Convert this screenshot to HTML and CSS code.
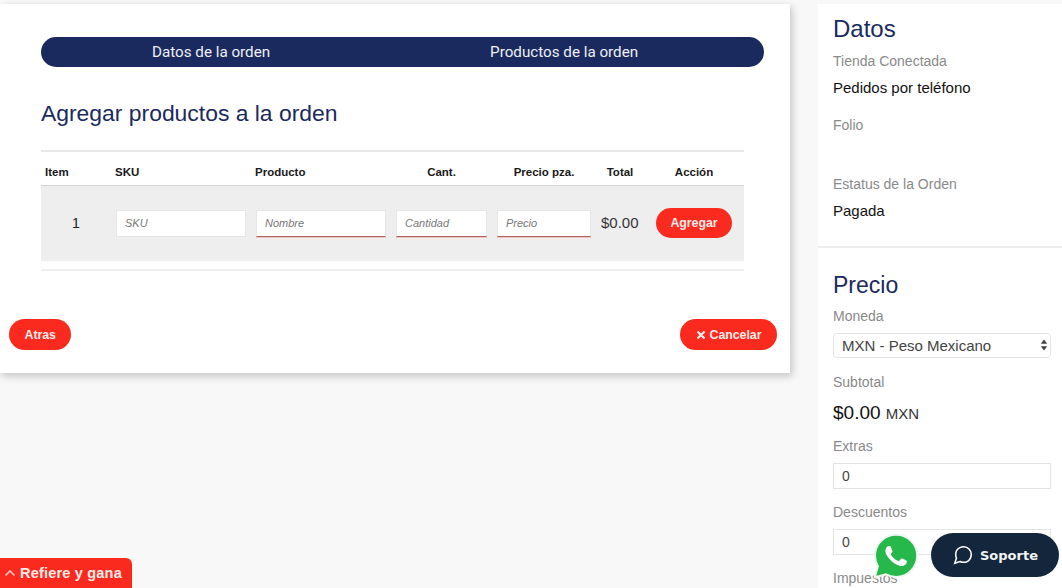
FILE: index.html
```html
<!DOCTYPE html>
<html lang="es">
<head>
  <meta charset="UTF-8" />
  <title>Agregar productos a la orden</title>
  <link rel="stylesheet" href="styles.css">
</head>
<body>
  <div class="layout">
    <main class="card">
      <nav class="steps">
        <span class="step step-first">Datos de la orden</span>
        <span class="step step-second">Productos de la orden</span>
      </nav>

      <h2 class="card-title">Agregar productos a la orden</h2>

      <table class="products">
        <colgroup>
          <col class="col-item"><col class="col-sku"><col class="col-name"><col class="col-qty">
          <col class="col-price"><col class="col-total"><col class="col-action">
        </colgroup>
        <thead>
          <tr>
            <th class="left">Item</th>
            <th class="left">SKU</th>
            <th class="left">Producto</th>
            <th>Cant.</th>
            <th>Precio pza.</th>
            <th>Total</th>
            <th>Acción</th>
          </tr>
        </thead>
        <tbody>
          <tr>
            <td class="row-num">1</td>
            <td><input class="cell-input" type="text" placeholder="SKU" /></td>
            <td><input class="cell-input required" type="text" placeholder="Nombre" /></td>
            <td><input class="cell-input required" type="text" placeholder="Cantidad" /></td>
            <td><input class="cell-input required" type="text" placeholder="Precio" /></td>
            <td class="row-total">$0.00</td>
            <td class="row-action"><button class="btn btn-add" type="button">Agregar</button></td>
          </tr>
        </tbody>
      </table>
      <div class="products-end"></div>

      <div class="card-actions">
        <button class="btn" type="button">Atras</button>
        <button class="btn" type="button">
          <svg class="btn-x" viewBox="0 0 10 10"><path d="M1.5 1.5l7 7M8.5 1.5l-7 7" /></svg>Cancelar
        </button>
      </div>
    </main>

    <aside class="side">
      <section class="side-block side-data">
        <h3 class="side-title">Datos</h3>
        <div class="label">Tienda Conectada</div>
        <div class="value">Pedidos por teléfono</div>
        <div class="label label-folio">Folio</div>
        <div class="value value-empty"></div>
        <div class="label">Estatus de la Orden</div>
        <div class="value">Pagada</div>
      </section>

      <section class="side-block side-price">
        <h3 class="side-title">Precio</h3>
        <div class="label">Moneda</div>
        <div class="select-wrap">
          <select class="field-box">
            <option>MXN - Peso Mexicano</option>
          </select>
          <svg class="select-arrows" viewBox="0 0 8 12"><path d="M4 0.5L7.2 4.8H0.8zM4 11.5L0.8 7.2H7.2z" /></svg>
        </div>
        <div class="label">Subtotal</div>
        <div class="amount">$0.00 <small>MXN</small></div>
        <div class="label">Extras</div>
        <input class="field-box" type="text" value="0" />
        <div class="label">Descuentos</div>
        <input class="field-box" type="text" value="0" />
        <div class="label">Impuestos</div>
      </section>
    </aside>
  </div>

  <a class="refer" href="#">
    <svg class="refer-arrow" viewBox="0 0 12 8"><path d="M1.5 6.5L6 2l4.5 4.5" /></svg>Refiere y gana
  </a>

  <a class="whatsapp" href="#">
    <svg viewBox="-1.5 -1.5 27 27">
      <path class="wa-bubble" d="M12.05 0C5.495 0 .16 5.335.157 11.892c0 2.096.547 4.142 1.588 5.945L.057 24l6.305-1.654a11.882 11.882 0 005.683 1.448h.005c6.554 0 11.89-5.335 11.893-11.893A11.821 11.821 0 0012.05 0z" />
      <path class="wa-phone" d="M17.472 14.382c-.297-.149-1.758-.867-2.03-.967-.273-.099-.471-.148-.67.15-.197.297-.767.966-.94 1.164-.173.199-.347.223-.644.075-.297-.15-1.255-.463-2.39-1.475-.883-.788-1.48-1.761-1.653-2.059-.173-.297-.018-.458.13-.606.134-.133.298-.347.446-.52.149-.174.198-.298.298-.497.099-.198.05-.371-.025-.52-.075-.149-.669-1.612-.916-2.207-.242-.579-.487-.5-.669-.51-.173-.008-.371-.01-.57-.01-.198 0-.52.074-.792.372-.272.297-1.04 1.016-1.04 2.479 0 1.462 1.065 2.875 1.213 3.074.149.198 2.096 3.2 5.077 4.487.709.306 1.262.489 1.694.625.712.227 1.36.195 1.871.118.571-.085 1.758-.719 2.006-1.413.248-.694.248-1.289.173-1.413-.074-.124-.272-.198-.57-.347z" />
    </svg>
  </a>

  <a class="support" href="#">
    <svg class="support-icon" viewBox="0 0 24 24"><path d="M21 11.5a8.38 8.38 0 0 1-.9 3.8 8.5 8.5 0 0 1-7.6 4.7 8.38 8.38 0 0 1-3.8-.9L3 21l1.9-5.7a8.38 8.38 0 0 1-.9-3.8 8.5 8.5 0 0 1 4.7-7.6 8.38 8.38 0 0 1 3.8-.9h.5a8.48 8.48 0 0 1 8 8v.5z" /></svg>
    Soporte
  </a>
</body>
</html>
```

FILE: styles.css
```css
* {
  box-sizing: border-box;
}

html, body {
  height: 100%;
  overflow: hidden;
}

body {
  font-family: 'Liberation Sans', Arial, sans-serif;
  background-color: #f8f8f8;
  color: #111;
  margin: 0;
  padding: 4px 0 0;
}

.layout {
  display: flex;
  align-items: flex-start;
  gap: 28px;
}

/* main card */
.card {
  width: 790px;
  height: 369px;
  flex-shrink: 0;
  background-color: #fff;
  box-shadow: 2px 3px 8px rgba(0, 0, 0, 0.22);
  padding: 33px 13px 0 9px;
}

.steps {
  display: flex;
  margin: 0 0 0 32px;
  width: 723px;
  height: 30px;
  align-items: center;
  background-color: #1b2a5e;
  border-radius: 15px;
  color: #eef0f6;
  font-family: Roboto, sans-serif;
  font-size: 15.2px;
}

.step-first {
  margin-left: 111px;
}

.step-second {
  margin-left: 220px;
}

.card-title {
  margin: 32px 0 22px 32px;
  font-size: 22.9px;
  line-height: 29px;
  font-weight: 400;
  color: #1b2a5e;
}

.products {
  margin-left: 32px;
  width: 703px;
  table-layout: fixed;
  border-collapse: collapse;
  border-top: 2px solid #e8e8e8;
}

.col-item { width: 70px; }
.col-sku { width: 140px; }
.col-name { width: 140px; }
.col-qty { width: 101px; }
.col-price { width: 104px; }
.col-total { width: 48px; }
.col-action { width: 100px; }

.products th {
  height: 34px;
  padding: 7px 0 0;
  font-size: 11.5px;
  font-weight: 700;
  text-align: center;
  color: #1a1a1a;
  border-bottom: 1px solid #d4d4d4;
}

.products th.left {
  text-align: left;
  padding-left: 4px;
}

.products td {
  height: 76px;
  padding: 0 5px;
  background-color: #eeeeee;
}

.products-end {
  margin: 8px 0 0 32px;
  width: 703px;
  border-top: 2px solid #efefef;
}

.row-num {
  text-align: center;
  font-size: 14px;
  color: #222;
}

.products td.row-total {
  padding: 0 0 2px 5px;
  font-size: 15px;
  color: #333;
}

.products td.row-action {
  padding: 0 12px;
  text-align: center;
}

.cell-input {
  display: block;
  width: 100%;
  height: 27px;
  padding: 0 8px;
  background-color: #fff;
  border: 1px solid #e6e6e6;
  font-family: 'Liberation Sans', Arial, sans-serif;
  font-size: 11px;
  font-style: italic;
  color: #555;
}

.cell-input::placeholder {
  color: #777;
  opacity: 1;
}

.cell-input.required {
  border-bottom: 1px solid #b5635e;
  box-shadow: 0 1px 0 rgba(240, 100, 90, 0.3);
}

.btn {
  height: 31px;
  padding: 0 15.5px;
  border: none;
  border-radius: 16px;
  background-color: #fb2a1e;
  color: #fdecea;
  font-family: 'Liberation Sans', Arial, sans-serif;
  font-size: 12.3px;
  font-weight: 700;
}

.btn-add {
  height: 30px;
  width: 76px;
  padding: 0;
}

.btn-x {
  width: 10px;
  height: 10px;
  margin-right: 4px;
  vertical-align: -1px;
  fill: none;
  stroke: #fdecea;
  stroke-width: 2.2;
}

.card-actions {
  display: flex;
  justify-content: space-between;
  margin-top: 48px;
}

/* right column */
.side {
  flex: 1;
  min-width: 0;
  background-color: #fff;
}

.side-block {
  padding: 10px 11px 25px 15px;
}

.side-data {
  border-bottom: 2px solid #eeeeee;
}

.side-price {
  padding-top: 22px;
}

.side-title {
  margin: 0 0 8px;
  font-size: 24px;
  line-height: 30px;
  font-weight: 400;
  color: #1b2a5e;
}

.side-price .side-title {
  margin-bottom: 7px;
  font-size: 23px;
}

.label {
  padding-top: 1px;
  font-size: 14px;
  line-height: 17px;
  color: #8a8a8a;
}

.value {
  margin-top: 8px;
  font-size: 15px;
  line-height: 20px;
  color: #111;
}

.label-folio {
  margin-top: 18px;
}

.value-empty {
  height: 18px;
  margin-bottom: 15px;
}

.select-wrap {
  position: relative;
}

.field-box {
  display: block;
  width: 100%;
  height: 26px;
  margin: 8px 0 14px;
  padding: 0 8px;
  appearance: none;
  background-color: #fff;
  border: 1px solid #e4e4e4;
  font-family: 'Liberation Sans', Arial, sans-serif;
  font-size: 14px;
  color: #444;
}

select.field-box {
  height: 25px;
  margin-bottom: 15px;
  border-radius: 4px;
  font-size: 15px;
}

.select-arrows {
  position: absolute;
  right: 3px;
  top: 6px;
  width: 8px;
  height: 12px;
  fill: #444;
}

.amount {
  margin: 11px 0 12px;
  font-size: 19px;
  line-height: 22px;
  color: #111;
}

.amount small {
  font-size: 15px;
  color: #333;
}

/* floating buttons */
.refer {
  position: fixed;
  left: 0;
  bottom: 0;
  display: flex;
  align-items: center;
  width: 132px;
  height: 30px;
  padding: 0 0 0 4px;
  background-color: #fb2a1e;
  border-radius: 0 6px 0 0;
  color: #fdecea;
  font-size: 14.5px;
  font-weight: 700;
  letter-spacing: 0.2px;
  text-decoration: none;
}

.refer-arrow {
  width: 12px;
  height: 8px;
  margin-right: 4px;
  fill: none;
  stroke: #fbc4bf;
  stroke-width: 1.6;
}

.whatsapp {
  position: fixed;
  left: 872px;
  top: 532px;
  width: 48px;
  height: 48px;
}

.whatsapp svg {
  display: block;
  width: 100%;
  height: 100%;
}

.wa-bubble {
  fill: #27b84c;
  stroke: #f1f5f1;
  stroke-width: 1.2;
}

.wa-phone {
  fill: #fff;
}

.support {
  position: fixed;
  left: 931px;
  top: 533px;
  display: flex;
  align-items: center;
  justify-content: center;
  gap: 6px;
  width: 128px;
  height: 44px;
  background-color: #14263c;
  border-radius: 22px;
  color: #f2f4f6;
  font-family: 'DejaVu Sans', sans-serif;
  font-size: 13px;
  font-weight: 700;
  text-decoration: none;
}

.support-icon {
  width: 22px;
  height: 22px;
  fill: none;
  stroke: #fff;
  stroke-width: 1.7;
}
```
